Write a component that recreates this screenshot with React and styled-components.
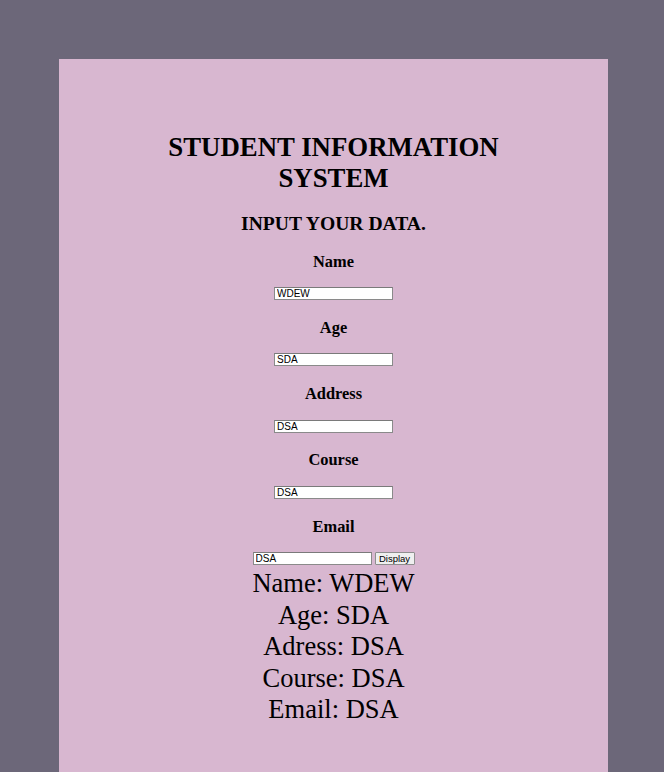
import React, { useState } from 'react';
import styled, { createGlobalStyle } from 'styled-components';

const GlobalStyle = createGlobalStyle`
  html, body {
    margin: 0;
    padding: 0;
    background: #6c6779;
  }
  body {
    font-family: "Liberation Serif", "Times New Roman", serif;
    overflow: hidden;
  }
`;

const Page = styled.div`
  padding: 59px 0 0 59px;
  min-height: 772px;
  box-sizing: border-box;
`;

const Panel = styled.div`
  width: 549px;
  min-height: 713px;
  background: #d8b7d0;
  color: #000;
  text-align: center;
  padding-top: 73px;
  box-sizing: border-box;
`;

const Title = styled.h1`
  margin: 0 auto;
  width: 400px;
  font-size: 26.8px;
  line-height: 31px;
  font-weight: bold;
`;

const Subtitle = styled.h2`
  margin: 19px 0 0;
  font-size: 19.6px;
  line-height: 22.5px;
  font-weight: bold;
`;

const Field = styled.div`
  display: flex;
  flex-direction: column;
  align-items: center;
  margin-top: ${p => (p.$first ? '17px' : '18.9px')};
`;

const Label = styled.h3`
  margin: 0;
  font-size: 16.4px;
  line-height: 18.4px;
  font-weight: bold;
`;

const InputRow = styled.div`
  display: flex;
  justify-content: center;
  align-items: center;
  gap: 3px;
  margin-top: 16px;
`;

const TextInput = styled.input`
  width: 119px;
  height: 13px;
  box-sizing: border-box;
  padding: 0 2px;
  border: 1px solid #8a8a8a;
  border-top-color: #7a7a7a;
  background: #fff;
  font-family: "Liberation Sans", Arial, sans-serif;
  font-size: 10px;
  color: #000;
  outline: none;
`;

const Button = styled.button`
  width: 40px;
  height: 13px;
  box-sizing: border-box;
  padding: 0;
  border: 1px solid #8f8f8f;
  border-radius: 1px;
  background: #efefef;
  font-family: "Liberation Sans", Arial, sans-serif;
  font-size: 9.5px;
  line-height: 11px;
  color: #000;
`;

const Output = styled.div`
  margin-top: 3px;
  padding-bottom: 40px;
`;

const OutputLine = styled.p`
  margin: 0;
  font-size: 26.5px;
  line-height: 31.5px;
`;

const fields = [
  { key: 'name', label: 'Name' },
  { key: 'age', label: 'Age' },
  { key: 'address', label: 'Address' },
  { key: 'course', label: 'Course' },
  { key: 'email', label: 'Email' },
];

export default function App() {
  const [values, setValues] = useState({
    name: 'WDEW',
    age: 'SDA',
    address: 'DSA',
    course: 'DSA',
    email: 'DSA',
  });
  const [shown, setShown] = useState(values);

  const update = key => e => setValues({ ...values, [key]: e.target.value });

  return (
    <>
      <GlobalStyle />
      <Page>
        <Panel>
          <Title>STUDENT INFORMATION SYSTEM</Title>
          <Subtitle>INPUT YOUR DATA.</Subtitle>
          {fields.map((f, i) => (
            <Field key={f.key} $first={i === 0}>
              <Label>{f.label}</Label>
              <InputRow>
                <TextInput value={values[f.key]} onChange={update(f.key)} />
                {i === fields.length - 1 && (
                  <Button onClick={() => setShown(values)}>Display</Button>
                )}
              </InputRow>
            </Field>
          ))}
          <Output>
            <OutputLine>Name: {shown.name}</OutputLine>
            <OutputLine>Age: {shown.age}</OutputLine>
            <OutputLine>Adress: {shown.address}</OutputLine>
            <OutputLine>Course: {shown.course}</OutputLine>
            <OutputLine>Email: {shown.email}</OutputLine>
          </Output>
        </Panel>
      </Page>
    </>
  );
}
